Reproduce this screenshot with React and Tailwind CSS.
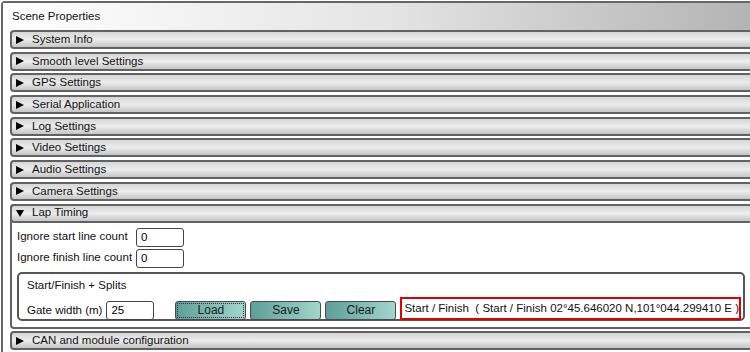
import { useState } from "react";

const SECTIONS = [
  "System Info",
  "Smooth level Settings",
  "GPS Settings",
  "Serial Application",
  "Log Settings",
  "Video Settings",
  "Audio Settings",
  "Camera Settings",
];

// Filled triangle, pointing right when closed and down when open
const Arrow = ({ open }) => (
  <svg width="8" height="8" viewBox="0 0 8 8" className="shrink-0">
    {open ? <polygon points="0,1 8,1 4,8" fill="#000" /> : <polygon points="0,0 8,4 0,8" fill="#000" />}
  </svg>
);

// Collapsible section header
const Header = ({ title, open }) => (
  <div className="h-[19px] flex items-center border-2 border-[#626262] rounded-[4px] bg-gradient-to-b from-[#d6d6d6] via-[#ececec] to-[#c6c6c6] pl-[4px]">
    <Arrow open={open} />
    <span className="ml-[8px] text-[#111]">{title}</span>
  </div>
);

const Field = ({ label, value, setValue }) => (
  <div className="flex items-center h-[21px]">
    <span className="w-[119px] text-[#111]">{label}</span>
    <input
      value={value}
      onChange={(e) => setValue(e.target.value)}
      className="w-[48px] h-[19px] border border-[#444] rounded-[3px] px-[4px] outline-none bg-white"
    />
  </div>
);

const TealButton = ({ label, focused }) => (
  <button
    className={`w-[71px] h-[19px] border border-[#4a4a4a] rounded-[3px] bg-gradient-to-r from-[#5c9f99] to-[#a2d6cd] text-[#1a1a1a] text-[12px] leading-none
      ${focused ? "outline outline-1 outline-dotted outline-[#333] -outline-offset-[3px]" : ""}`}
  >
    {label}
  </button>
);

export default function App() {
  const [startCount, setStartCount] = useState("0");
  const [finishCount, setFinishCount] = useState("0");
  const [gate, setGate] = useState("25");

  return (
    <div className="w-[750px] h-[352px] overflow-hidden bg-white font-['Liberation_Sans',Arial,sans-serif] text-[11.5px]">
      <div className="ml-[1px] mt-[1px] w-[780px] h-[380px] border-2 border-[#666] rounded-[4px] pl-[7px]">
        {/* Title bar */}
        <div className="-ml-[7px] h-[27px] flex items-center pl-[9px] bg-gradient-to-r from-white via-[#e4e4e4] to-[#b0b0b0] text-[#111]">
          Scene Properties
        </div>

        <div className="flex flex-col gap-[2.7px]">
          {SECTIONS.map((s) => (
            <Header key={s} title={s} />
          ))}

          {/* Lap Timing, expanded */}
          <div className="border-2 border-[#626262] rounded-[4px]">
            <div className="-m-[2px]">
              <Header title="Lap Timing" open />
            </div>
            <div className="pl-[5px] pt-[6px] pb-[6px] pr-[30px]">
              <Field label="Ignore start line count" value={startCount} setValue={setStartCount} />
              <Field label="Ignore finish line count" value={finishCount} setValue={setFinishCount} />

              {/* Start/Finish fieldset */}
              <div className="mt-[3px] w-[728px] h-[49px] border-2 border-[#555] rounded-[5px] pl-[8px] pt-[3px]">
                <div className="text-[#111]">Start/Finish + Splits</div>
                <div className="flex items-center mt-[7px]">
                  <span className="text-[#111]">Gate width (m)</span>
                  <input
                    value={gate}
                    onChange={(e) => setGate(e.target.value)}
                    className="ml-[4px] w-[48px] h-[19px] border border-[#444] rounded-[3px] px-[4px] outline-none bg-white"
                  />
                  <div className="ml-[21px] flex gap-[4px]">
                    <TealButton label="Load" focused />
                    <TealButton label="Save" />
                    <TealButton label="Clear" />
                  </div>
                  <div className="ml-[4px] -mt-[4px] h-[23px] w-[341px] border-2 border-[#e00000] flex items-center pl-[2px] text-[#111]">
                    Start / Finish&nbsp;&nbsp;( Start / Finish 02°45.646020 N,101°044.299410 E )
                  </div>
                </div>
              </div>
            </div>
          </div>

          <Header title="CAN and module configuration" />
        </div>
      </div>
    </div>
  );
}
